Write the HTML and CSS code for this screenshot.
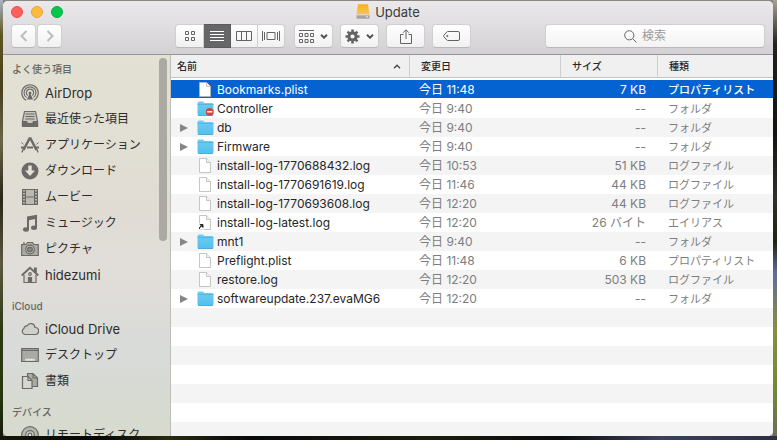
FILE: index.html
```html
<!DOCTYPE html>
<html lang="ja">
<head>
<meta charset="utf-8">
<title>Update</title>
<link rel="stylesheet" href="styles.css">
</head>
<body>
<svg class="defs" aria-hidden="true">
  <defs>
    <linearGradient id="folder-fill" x1="0" y1="0" x2="0" y2="1"><stop offset="0" stop-color="#6fcdf3"/><stop offset="1" stop-color="#55bfec"/></linearGradient>
    <linearGradient id="drive-fill" x1="0" y1="0" x2="0" y2="1"><stop offset="0" stop-color="#f9b21d"/><stop offset="1" stop-color="#f5c25a"/></linearGradient>
    <symbol id="folder" viewBox="0 0 17 15"><path d="M.5 2Q.5 .5 2 .5H5.500Q6.300 .5 6.700 1.200L7.200 2H15Q16.500 2 16.500 3.500V13Q16.500 14.500 15 14.500H2Q.5 14.500 .5 13Z" fill="url(#folder-fill)"/><path d="M.5 3.500H16.500" stroke="#4aaedb" stroke-width=".7"/><path d="M1 14.500H16" stroke="#3a9fcf" stroke-width=".8"/></symbol>
    <symbol id="file" viewBox="0 0 17 15"><path d="M2.500 .5H9.500L13.500 4.500V14.500H2.500Z" fill="#fff" stroke="#b8b8b8" stroke-width=".8"/><path d="M9.500 .5V4.500H13.500" fill="#f4f4f4" stroke="#b8b8b8" stroke-width=".8"/></symbol>
    <symbol id="alias" viewBox="0 0 17 15"><use href="#file"/><rect x="1" y="8.500" width="6" height="6" fill="#fff"/><path d="M2.300 14Q2 11.500 4.700 11M3 9.500H6V12.500Z" fill="#222" stroke="#222" stroke-width=".9"/></symbol>
    <symbol id="locked" viewBox="0 0 17 15"><use href="#folder"/><circle cx="12.700" cy="10.800" r="3.900" fill="#d9423c"/><path d="M10.200 10.800H15.200" stroke="#fff" stroke-width="1.500"/></symbol>
  </defs>
</svg>

<main class="window">
  <header class="toolbar">
    <div class="titlebar">
      <div class="lights">
        <button class="light close" aria-label="閉じる"></button>
        <button class="light minimize" aria-label="しまう"></button>
        <button class="light maximize" aria-label="拡大"></button>
      </div>
      <h1 class="title">
        <svg width="14" height="15" viewBox="0 0 14 15" aria-hidden="true"><path d="M2 .3H12L13.500 10.500H.5Z" fill="url(#drive-fill)"/><path d="M.5 10.500H13.500V14.700H.5Z" fill="#a5a4a1"/><path d="M.5 10.800H13.500" stroke="#e9e4da"/><path d="M10 12.800H12" stroke="#eee"/></svg>
        Update
      </h1>
    </div>
    <div class="tools">
      <div class="group nav">
        <button aria-label="戻る"><svg width="8" height="12" viewBox="0 0 8 12"><path d="M6.500 1L1.500 6L6.500 11" class="chev"/></svg></button>
        <button aria-label="進む"><svg width="8" height="12" viewBox="0 0 8 12"><path d="M1.500 1L6.500 6L1.500 11" class="chev"/></svg></button>
      </div>
      <div class="group views">
        <button aria-label="アイコン"><svg width="10" height="10" viewBox="0 0 10 10" class="line"><path d="M.5 .5H3.500V3.500H.5ZM6.500 .5H9.500V3.500H6.500ZM.5 6.500H3.500V9.500H.5ZM6.500 6.500H9.500V9.500H6.500Z"/></svg></button>
        <button class="active" aria-label="リスト"><svg width="14" height="10" viewBox="0 0 14 10" class="line light-line"><path d="M0 .5H14M0 3.500H14M0 6.500H14M0 9.500H14"/></svg></button>
        <button aria-label="カラム"><svg width="16" height="10" viewBox="0 0 16 10" class="line"><path d="M.5 .5H15.500V9.500H.5ZM5.500 .5V9.500M10.500 .5V9.500"/></svg></button>
        <button aria-label="Cover Flow"><svg width="18" height="10" viewBox="0 0 18 10" class="line"><path d="M.5 0V10M2.500 1V9M5 1.500H13V8.500H5ZM15.500 1V9M17.500 0V10"/></svg></button>
      </div>
      <div class="group singles">
        <button aria-label="項目の並び順"><svg width="15" height="13" viewBox="0 0 15 13" class="line"><path d="M0 .5H15M.5 3.500H3.500V6.500H.5ZM6 3.500H9V6.500H6ZM11.500 3.500H14.500V6.500H11.500ZM.5 9.500H3.500V12.500H.5ZM6 9.500H9V12.500H6ZM11.500 9.500H14.500V12.500H11.500Z"/></svg><svg width="8" height="5" viewBox="0 0 8 5" class="line drop"><path d="M1 .7L4 3.700L7 .7"/></svg></button>
        <button aria-label="操作"><svg width="15" height="15" viewBox="0 0 15 15"><g fill="none" stroke="#636363"><circle cx="7.500" cy="7.500" r="3.600" stroke-width="3"/><path stroke-width="2.600" d="M7.500 .5V3M7.500 12V14.500M.5 7.500H3M12 7.500H14.500M2.550 2.550L4.300 4.300M10.700 10.700L12.450 12.450M2.550 12.450L4.300 10.700M10.700 4.300L12.450 2.550"/></g></svg><svg width="8" height="5" viewBox="0 0 8 5" class="line drop"><path d="M1 .7L4 3.700L7 .7"/></svg></button>
        <button aria-label="共有"><svg width="12" height="15" viewBox="0 0 12 15" class="line"><path d="M3.500 5.500H.5V14.500H11.500V5.500H8.500M6 10V1M3 3.800L6 .8L9 3.800"/></svg></button>
        <button aria-label="タグを編集"><svg width="17" height="10" viewBox="0 0 17 10" class="line"><path d="M5 .5H15Q16.500 .5 16.500 2V8Q16.500 9.500 15 9.500H5Q4.300 9.500 3.800 9L.8 5.700Q.3 5 .8 4.300L3.800 1Q4.300 .5 5 .5Z"/><circle cx="4.300" cy="5" r=".7"/></svg></button>
      </div>
      <label class="search">
        <svg width="13" height="13" viewBox="0 0 13 13" class="line"><circle cx="5.300" cy="5.300" r="4.600"/><path d="M8.600 8.600L12.500 12.500"/></svg>
        <input type="search" placeholder="検索" aria-label="検索">
      </label>
    </div>
  </header>

  <div class="body">
    <nav class="sidebar">
      <h2>よく使う項目</h2>
      <ul>
        <li><a href="#" class="latin"><svg width="18" height="18" viewBox="0 0 18 18" class="side"><path d="M5.200 16.200A8.200 8.200 0 1 1 12.800 16.200M5.600 13.600A5.900 5.900 0 1 1 12.400 13.600M6.700 11.500A3.600 3.600 0 1 1 11.300 11.500"/><path d="M9 8.500L12 15.500H6Z" fill="#6b6a66" stroke="none"/><circle cx="9" cy="9" r="1.500" fill="#6b6a66" stroke="none"/></svg>AirDrop</a></li>
        <li><a href="#"><svg width="18" height="18" viewBox="0 0 18 18" class="side"><path d="M3.500 1.500H14.500L16.500 11V16.500H1.500V11Z" fill="#c6c5be"/><path d="M1.500 11.500H5.500L6.500 13.500H11.500L12.500 11.500H16.500V16.500H1.500Z" fill="#6b6a66"/><path d="M4.500 4H13.500M4.500 6.500H13.500M4.500 9H13.500"/></svg>最近使った項目</a></li>
        <li><a href="#"><svg width="18" height="18" viewBox="0 0 18 18" class="side"><path d="M8.500 2.500L2.500 14M9.500 2.500L15.500 14" stroke-width="2.500"/><path d="M2 13.500L1 16.500M16 13.500L17 16.500" stroke-width="1.300"/><path d="M0 11.500H3M6 11.500H12M15 11.500H18" stroke-width="1.800"/><path d="M7.500 2H10.500" stroke-width="1.600"/><path d="M.5 6.500L2.500 8.300M17.500 6.500L15.500 8.300" stroke-width="1"/></svg>アプリケーション</a></li>
        <li><a href="#"><svg width="18" height="18" viewBox="0 0 18 18"><circle cx="9" cy="9" r="8.500" fill="#6b6a66"/><path d="M7.300 3.500H10.700V8.500H14L9 14L4 8.500H7.300Z" fill="#e5e3da"/></svg>ダウンロード</a></li>
        <li><a href="#"><svg width="18" height="18" viewBox="0 0 18 18" class="side"><path d="M1 1H17V17H1Z" fill="#6b6a66" stroke="none"/><path d="M5 2H13V8.500H5ZM5 9.500H13V16H5Z" fill="#bbb9b2" stroke="none"/><path d="M3 2V17M15 2V17" stroke="#dedcd4" stroke-dasharray="1.500 1.500" stroke-width="1.300"/></svg>ムービー</a></li>
        <li><a href="#"><svg width="18" height="18" viewBox="0 0 18 18"><path d="M6 2.500L16 .8V13.500H14V5L8 6.200V15.500H6Z" fill="#6b6a66"/><ellipse cx="5" cy="15.500" rx="3" ry="2.200" fill="#6b6a66"/><ellipse cx="13" cy="13.700" rx="3" ry="2.200" fill="#6b6a66"/></svg>ミュージック</a></li>
        <li><a href="#"><svg width="18" height="18" viewBox="0 0 18 18" class="side"><path d="M.7 4.500H5L6.500 2.500H11.500L13 4.500H17.300V15.500H.7Z" fill="#aaa9a2"/><circle cx="9" cy="9.500" r="4.300" fill="#c8c6be"/><circle cx="9" cy="9.500" r="2.400" fill="#8a8983"/><path d="M2 3.200H4"/></svg>ピクチャ</a></li>
        <li><a href="#" class="latin"><svg width="18" height="18" viewBox="0 0 18 18" class="side"><path d="M3 9V16.500H15V9" fill="#d9d7cf"/><path d="M.7 9.500L9 1.800L17.300 9.500" stroke-width="1.900"/><path d="M13.500 2H15.200V6L13.500 4.500Z" fill="#6b6a66"/><path d="M7.500 11.500H10.500V16.500H7.500Z" fill="#6b6a66"/><circle cx="9" cy="8" r="1.300"/></svg>hidezumi</a></li>
      </ul>
      <h2>iCloud</h2>
      <ul>
        <li><a href="#" class="latin"><svg width="18" height="18" viewBox="0 0 18 18" class="side"><path d="M4 14.500A3.200 3.200 0 0 1 3 8.500A2.600 2.600 0 0 1 6 6A4.200 4.200 0 0 1 14 7.500A3.500 3.500 0 0 1 14.300 14.500Z" fill="#d0d0ca"/></svg>iCloud Drive</a></li>
        <li><a href="#"><svg width="18" height="18" viewBox="0 0 18 18" class="side"><path d="M.7 2.500H17.300V15.500H.7Z" fill="#aaaaa4"/><path d="M.7 4.300H17.300"/><path d="M4.500 13.800H13.500" stroke="#efeee9" stroke-width="2" stroke-dasharray="2 .4"/></svg>デスクトップ</a></li>
        <li><a href="#"><svg width="18" height="18" viewBox="0 0 18 18" class="side"><path d="M6.500 1.500H12L16.500 6V14.500H6.500Z" fill="#aaaaa4"/><path d="M12 1.500V6H16.500"/><path d="M1.500 4.500H7L11 8.500V16.500H1.500Z" fill="#d6d7d0"/><path d="M7 4.500V8.500H11"/></svg>書類</a></li>
      </ul>
      <h2>デバイス</h2>
      <ul>
        <li><a href="#"><svg width="18" height="18" viewBox="0 0 18 18" class="side"><circle cx="9" cy="9" r="8.300" fill="#b5b6ae"/><circle cx="9" cy="9" r="4.300" fill="#cccdc5"/><circle cx="9" cy="9" r="1.800" fill="#e4e4dc"/></svg>リモートディスク</a></li>
      </ul>
      <span class="scrollbar"></span>
    </nav>

    <section class="list">
      <table>
        <colgroup><col><col class="c-date"><col class="c-size"><col class="c-kind"></colgroup>
        <thead>
          <tr>
            <th aria-sort="ascending"><div>名前<svg width="8" height="5" viewBox="0 0 8 5" class="line sort"><path d="M1 4.300L4 1.300L7 4.300"/></svg></div></th>
            <th><div>変更日</div></th><th><div>サイズ</div></th><th><div>種類</div></th>
          </tr>
        </thead>
        <tbody>
          <tr class="selected"><td><div><i></i><svg><use href="#file"/></svg>Bookmarks.plist</div></td><td>今日 11:48</td><td>7 KB</td><td>プロパティリスト</td></tr>
          <tr><td><div><i></i><svg><use href="#locked"/></svg>Controller</div></td><td>今日 9:40</td><td>--</td><td>フォルダ</td></tr>
          <tr><td><div><i class="open"></i><svg><use href="#folder"/></svg>db</div></td><td>今日 9:40</td><td>--</td><td>フォルダ</td></tr>
          <tr><td><div><i class="open"></i><svg><use href="#folder"/></svg>Firmware</div></td><td>今日 9:40</td><td>--</td><td>フォルダ</td></tr>
          <tr><td><div><i></i><svg><use href="#file"/></svg>install-log-1770688432.log</div></td><td>今日 10:53</td><td>51 KB</td><td>ログファイル</td></tr>
          <tr><td><div><i></i><svg><use href="#file"/></svg>install-log-1770691619.log</div></td><td>今日 11:46</td><td>44 KB</td><td>ログファイル</td></tr>
          <tr><td><div><i></i><svg><use href="#file"/></svg>install-log-1770693608.log</div></td><td>今日 12:20</td><td>44 KB</td><td>ログファイル</td></tr>
          <tr><td><div><i></i><svg><use href="#alias"/></svg>install-log-latest.log</div></td><td>今日 12:20</td><td>26 バイト</td><td>エイリアス</td></tr>
          <tr><td><div><i class="open"></i><svg><use href="#folder"/></svg>mnt1</div></td><td>今日 9:40</td><td>--</td><td>フォルダ</td></tr>
          <tr><td><div><i></i><svg><use href="#file"/></svg>Preflight.plist</div></td><td>今日 11:48</td><td>6 KB</td><td>プロパティリスト</td></tr>
          <tr><td><div><i></i><svg><use href="#file"/></svg>restore.log</div></td><td>今日 12:20</td><td>503 KB</td><td>ログファイル</td></tr>
          <tr><td><div><i class="open"></i><svg><use href="#folder"/></svg>softwareupdate.237.evaMG6</div></td><td>今日 12:20</td><td>--</td><td>フォルダ</td></tr>
        </tbody>
      </table>
    </section>
  </div>
</main>
</body>
</html>
```
FILE: styles.css
```css
* { box-sizing: border-box; }

body {
  margin: 0;
  height: 100vh;
  padding: 1px 4px 4px 3px;
  font: 12px/18px Inter, "Noto Sans CJK JP", sans-serif;
  color: #262626;
  background:
    linear-gradient(90deg, #16180a, #050602 12%, #262c10 22%, #07080a 32%, #1a1d0c 55%, #0a0b0c 72%, #3c415c 85%, #2a2f42) bottom / 100% 4px no-repeat,
    linear-gradient(#a9a294, #23221b 10%, #12140f 30%, #30312a 45%, #20240f 55%, #5d6c9b 62%, #8a8f3c 75%, #6f8c2c 88%, #6e6a5e) right / 4px 100% no-repeat,
    linear-gradient(#a8b4c4, #5d561d 8%, #473f1e 20%, #6b6548 32%, #2b2516 45%, #5c5740 60%, #2c3a14 75%, #26370f 90%, #14180a) left / 3px 100% no-repeat,
    #8a8680;
}

.defs { position: absolute; width: 0; height: 0; }

button { padding: 0; border: 0; background: none; display: flex; align-items: center; justify-content: center; }
svg { flex: none; }

.window {
  height: 100%;
  display: flex;
  flex-direction: column;
  overflow: hidden;
  border-radius: 5px;
  background: #fff;
}

/* Title bar and tools */
.toolbar {
  flex: none;
  padding-bottom: 6px;
  border-bottom: 1px solid #97959a;
  background: linear-gradient(#ebe9eb, #d3d1d4);
}
.titlebar {
  display: grid;
  grid-template-columns: 1fr auto 1fr;
  align-items: center;
  height: 21px;
  margin-bottom: 2px;
  padding: 0 8px;
}
.lights { display: flex; gap: 8px; }
.light { width: 12px; height: 12px; border-radius: 50%; }
.close { background: #fc605c; border: 1px solid #e9504c; }
.minimize { background: #fdbc40; border: 1px solid #e5a632; }
.maximize { background: #06c64c; border: 1px solid #0aad3f; }
.title {
  display: flex;
  align-items: center;
  gap: 5px;
  margin: 0;
  font-size: 13px;
  font-weight: 400;
  color: #3b3b3b;
}

.tools { display: flex; padding: 0 8px; }
.group { display: flex; gap: 1px; }
.group button {
  height: 24px;
  width: 25px;
  border: 1px solid #d0ced1;
  border-bottom-color: #b9b7ba;
  border-radius: 4px;
  background: linear-gradient(#fff, #f2f1f2);
}
.views { margin-left: 113px; gap: 0; }
.views button { width: 27px; border-radius: 0; border-left-width: 0; }
.views button:first-child { width: 29px; border-left-width: 1px; border-radius: 4px 0 0 4px; }
.views button:last-child { border-radius: 0 4px 4px 0; }
.views button.active { background: #666567; border-color: #5b5a5c; }
.singles { margin-left: 9px; gap: 7px; }
.singles button { width: 39px; gap: 6px; }

.line { fill: none; stroke: #646464; stroke-width: 1; }
.light-line { stroke: #fff; }
.drop { stroke: #555; stroke-width: 2; }
.chev { fill: none; stroke: #bcbcbc; stroke-width: 2; }

.search {
  display: flex;
  align-items: center;
  gap: 5px;
  width: 220px;
  height: 24px;
  margin-left: auto;
  padding-left: 78px;
  border: 1px solid #d0ced1;
  border-bottom-color: #b9b7ba;
  border-radius: 4px;
  background: linear-gradient(#fff, #f4f3f4);
}
.search input {
  flex: 1;
  min-width: 0;
  padding: 0;
  border: 0;
  outline: 0;
  background: none;
  font: inherit;
}
.search input::placeholder { color: #9b9b9b; opacity: 1; }

.body { flex: 1; display: flex; min-height: 0; }

/* Sidebar */
.sidebar {
  position: relative;
  flex: none;
  width: 168px;
  overflow: hidden;
  border-right: 1px solid #bdbcb5;
  background: linear-gradient(#e3e1d3, #e0dcd4 40%, #e1ddd9 58%, #d8dbd8 78%, #d7dacd);
}
.sidebar h2 {
  margin: 0;
  padding: 9px 9px 0;
  height: 28px;
  font-size: 10px;
  font-weight: 500;
  color: #67665f;
}
.sidebar h2:first-child { height: 25px; padding-top: 5px; }
.sidebar ul { list-style: none; margin: 0; padding: 0; }
.sidebar a {
  display: flex;
  align-items: center;
  gap: 6px;
  height: 26px;
  padding-left: 18px;
  color: #2c2b29;
  text-decoration: none;
  white-space: nowrap;
}
.sidebar .latin { font-size: 13px; }
.side { fill: none; stroke: #6b6a66; stroke-width: 1.2; }
.scrollbar {
  position: absolute;
  top: 3px;
  right: 3px;
  width: 8px;
  height: 183px;
  border-radius: 4px;
  background: #aba9a1;
}

/* File list; the stripes carry on below the last row */
.list {
  flex: 1;
  min-width: 0;
  overflow: hidden;
  background: linear-gradient(#f4f4f4 50%, #fff 50%) 0 25px / 100% 38px;
}
table { width: 100%; table-layout: fixed; border-collapse: collapse; }
.c-date { width: 151px; }
.c-size { width: 97px; }
.c-kind { width: 116px; }
th {
  height: 25px;
  padding: 0;
  vertical-align: top;
  text-align: left;
  font-size: 10px;
  font-weight: 500;
  background: linear-gradient(#f1f0f1 22px, #c6c5c6 22px, #c6c5c6 23px, #fff 23px);
}
th div {
  display: flex;
  align-items: center;
  justify-content: space-between;
  height: 22px;
  padding: 0 8px 0 11px;
  border-left: 1px solid #d0cfd0;
}
th:first-child div { padding-left: 6px; border-left: 0; }
.sort { stroke: #444; stroke-width: 1.4; }

td { height: 19px; padding: 0 0 0 10px; white-space: nowrap; color: #7d7d7d; line-height: 18px; }
td:first-child { padding: 0; color: #262626; }
td:nth-child(3) { padding: 0 11px 0 0; text-align: right; }
td:last-child { padding-left: 11px; font-size: 11px; }
td div { display: flex; align-items: center; padding-left: 9px; }
td svg { width: 17px; height: 15px; margin-right: 3px; }
td i { width: 17px; height: 8px; }
td .open::before {
  content: "";
  display: block;
  width: 0;
  border: 4px solid transparent;
  border-left: 8px solid #868686;
  border-right: 0;
}
.selected td, .selected td:first-child {
  color: #fff;
  background: linear-gradient(#0562d1 18px, #fff 18px);
}
.selected td:last-child { font-weight: 500; }
```
